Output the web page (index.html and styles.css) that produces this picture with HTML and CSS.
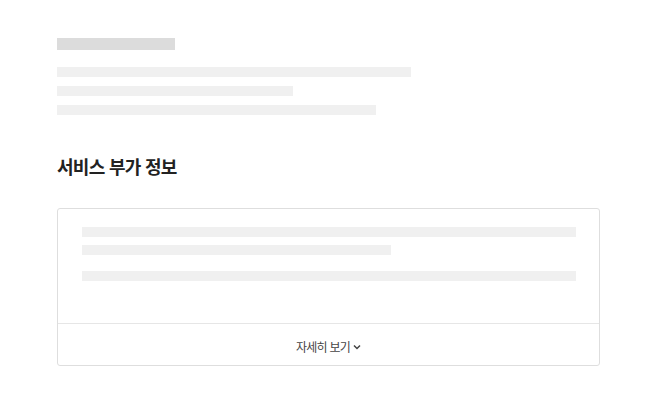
FILE: index.html
```html
<!DOCTYPE html>
<html lang="ko">
<head>
<meta charset="utf-8">
<link rel="stylesheet" href="styles.css">
</head>
<body>
<div class="page">
  <div class="skeleton-top">
    <div class="sk sk-title"></div>
    <div class="sk-lines">
      <div class="sk sk-line w354"></div>
      <div class="sk sk-line w236"></div>
      <div class="sk sk-line w319"></div>
    </div>
  </div>
  <h2 class="heading">서비스 부가 정보</h2>
  <div class="card">
    <div class="card-body">
      <div class="sk sk-line full"></div>
      <div class="sk sk-line w309"></div>
      <div class="sk sk-line full gap-top"></div>
    </div>
    <div class="card-foot">
      <span class="more">자세히 보기</span>
      <svg class="chev" width="8" height="6" viewBox="0 0 8 6"><path d="M1 1.5 L4 4.5 L7 1.5" fill="none" stroke="#444" stroke-width="1.5"/></svg>
    </div>
  </div>
</div>
</body>
</html>
```
FILE: styles.css
```css
html, body {
  margin: 0;
  padding: 0;
  background: #fff;
}
body {
  font-family: "Noto Sans CJK KR", "Noto Sans", sans-serif;
  color: #222;
}
.page {
  padding: 38px 56px 0 57px;
}
.sk {
  background: #f0f0f0;
}
.sk-title {
  width: 118px;
  height: 12px;
  background: #dcdcdc;
}
.sk-lines {
  display: flex;
  flex-direction: column;
  gap: 9px;
  margin-top: 17px;
}
.sk-line {
  height: 10px;
}
.w354 { width: 354px; }
.w236 { width: 236px; }
.w319 { width: 319px; }
.w309 { width: 309px; }
.full { width: 100%; }
.heading {
  margin: 0;
  margin-top: 38px;
  font-size: 18px;
  font-weight: 700;
  line-height: 26px;
  letter-spacing: -0.7px;
  color: #222;
}
.card {
  margin-top: 29px;
  border: 1px solid #dedede;
  border-radius: 3px;
}
.card-body {
  padding: 18px 23px 0 24px;
  height: 114px;
  box-sizing: border-box;
  display: flex;
  flex-direction: column;
  gap: 8px;
}
.gap-top {
  margin-top: 8px;
}
.card-foot {
  border-top: 1px solid #e6e6e6;
  height: 42px;
  box-sizing: border-box;
  padding-top: 4px;
  display: flex;
  align-items: center;
  justify-content: center;
  gap: 3px;
}
.more {
  font-size: 12px;
  letter-spacing: -0.8px;
  color: #444;
  line-height: 16px;
}
.chev {
  display: block;
  margin-top: 1px;
}
```
